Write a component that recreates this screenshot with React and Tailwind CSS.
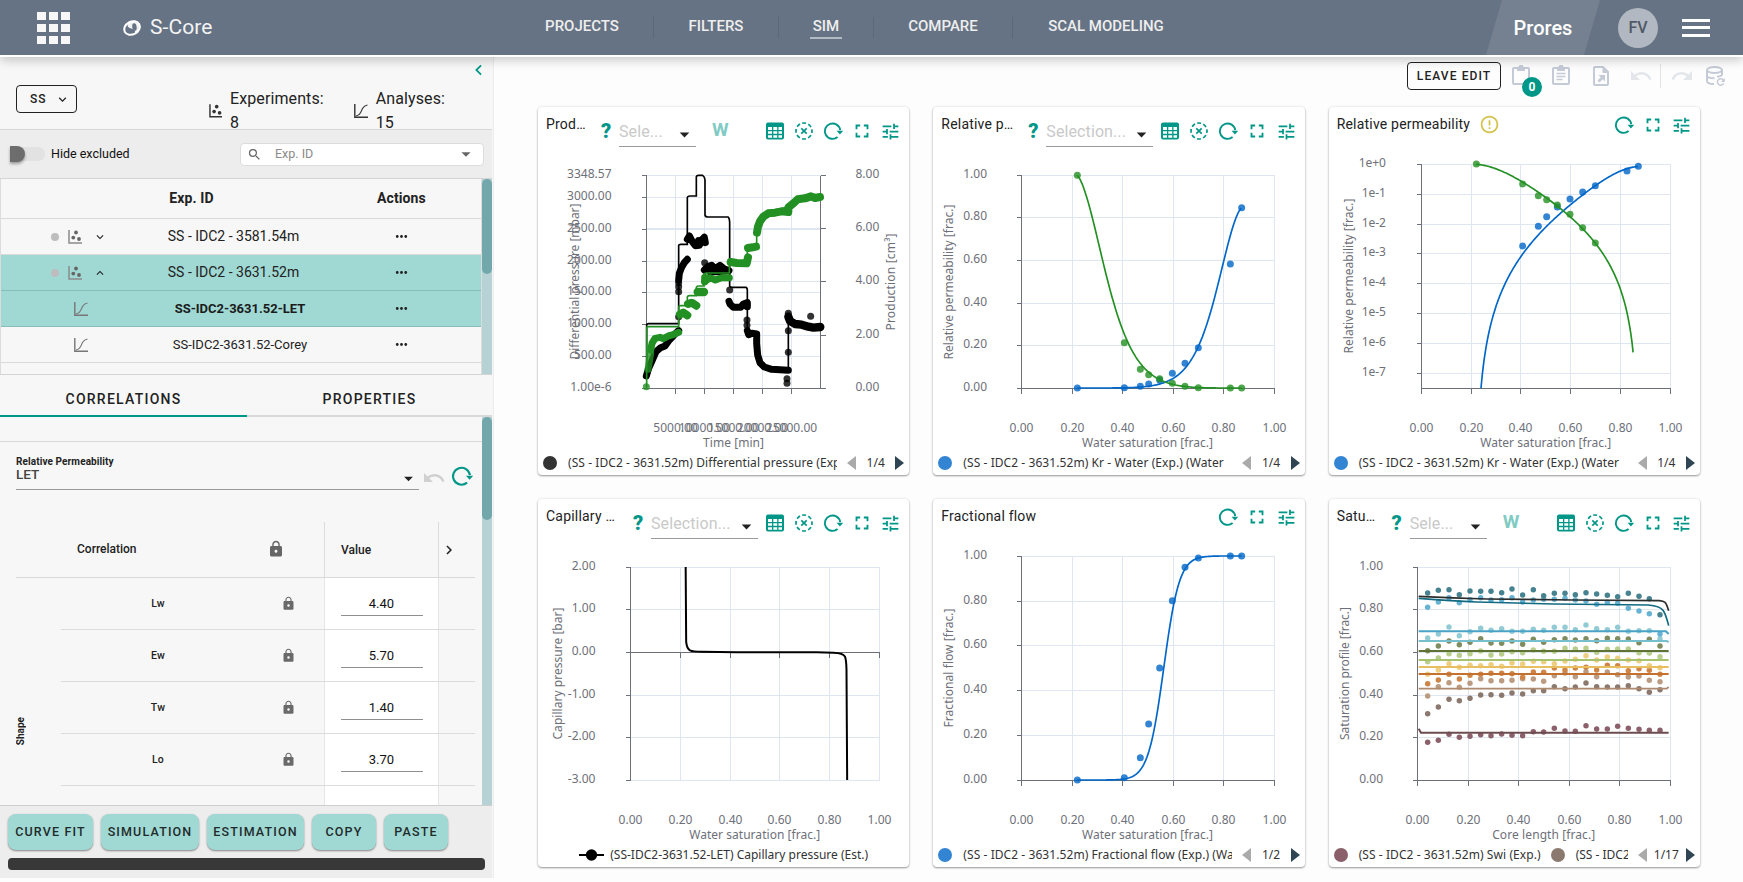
import React from "react";
import {
  MdFullscreen,
  MdTune,
  MdLock,
  MdSearch,
  MdArrowDropDown,
  MdUndo,
  MdRedo,
  MdErrorOutline,
  MdMoreHoriz,
  MdChevronRight,
  MdExpandMore,
  MdExpandLess,
  MdChevronLeft,
} from "react-icons/md";

/* ---------- icons ---------- */

function Logo() {
  return (
    <svg width="20" height="18" viewBox="0 0 20 18" className="text-white">
      <g transform="rotate(-28 10 9)">
        <ellipse cx="10" cy="9" rx="8.2" ry="6.4" fill="none" stroke="#fff" strokeWidth="2" />
        <path d="M9 2.5C6 5 7 7 9 9s3 4 1 6.5l5-1.5 3-5-2-4.500-4-2.500z" fill="#fff" opacity=".9" />
        <ellipse cx="12.6" cy="9.300" rx="2.200" ry="3.800" fill="#667384" transform="rotate(20 12.600 9.300)" />
      </g>
    </svg>
  );
}

function ScatterIcon({ color = "#4a4a4a", dot = color }) {
  return (
    <svg width="14" height="14" viewBox="0 0 14 14">
      <path d="M1 0v13h13" fill="none" stroke={color} strokeWidth="1.500" />
      <circle cx="8" cy="2.500" r="1.900" fill={dot} />
      <circle cx="5.300" cy="7.600" r="1.900" fill={dot} />
      <circle cx="11" cy="9" r="1.900" fill={dot} />
    </svg>
  );
}

function CurveIcon({ color = "#555" }) {
  return (
    <svg width="14" height="14" viewBox="0 0 14 14" fill="none" stroke={color}>
      <path d="M.8 0v13.200H14" strokeWidth="1.400" />
      <path d="M2 12C7 11 7 7 8.500 4.500S11 1.500 13.500 1" strokeWidth="1.200" />
    </svg>
  );
}

function RefreshIcon({ size = 20 }) {
  return (
    <svg width={size} height={size} viewBox="0 0 20 20">
      <path d="M17.200 9.200A7.700 7.700 0 1 0 14.600 16" fill="none" stroke="#009688" strokeWidth="1.900" />
      <path d="M13.600 9.800h6.600l-3.300 3.600z" fill="#009688" />
    </svg>
  );
}

function TableIcon() {
  return (
    <svg width="18" height="18" viewBox="0 0 18 18">
      <path
        fill="#009688"
        fillRule="evenodd"
        d="M2 .5h14a2 2 0 0 1 2 2v13a2 2 0 0 1-2 2H2a2 2 0 0 1-2-2v-13a2 2 0 0 1 2-2zM2 5v3h4V5zm5.300 0v3h3.900V5zm5.200 0v3H16V5zM2 9.300v2.500h4V9.300zm5.300 0v2.500h3.900V9.300zm5.200 0v2.500H16V9.300zM2 13.200v2.500h4v-2.500zm5.300 0v2.500h3.900v-2.500zm5.200 0v2.500H16v-2.500z"
      />
    </svg>
  );
}

function DashedClearIcon() {
  return (
    <svg width="18" height="18" viewBox="0 0 18 18" fill="none" stroke="#009688">
      <circle cx="9" cy="9" r="8" strokeWidth="1.700" strokeDasharray="3.900 2.383" strokeDashoffset="2" />
      <path d="M6.300 6.300l5.400 5.400M11.700 6.300l-5.400 5.400" strokeWidth="1.700" />
    </svg>
  );
}

function ClipboardIcon({ lines }) {
  return (
    <svg width="18" height="20" viewBox="0 0 18 20" fill="none" stroke="#c5cbd6" strokeWidth="2">
      <rect x="1" y="3" width="16" height="16" rx="1" />
      <path d="M5 3h8v3H5z" fill="#c5cbd6" stroke="none" />
      <circle cx="9" cy="2.500" r="1.700" />
      {lines && <path d="M4.500 8.500h9M4.500 11.500h9M4.500 14.500h6" strokeWidth="1.600" />}
    </svg>
  );
}

function FileExportIcon() {
  return (
    <svg width="16" height="20" viewBox="0 0 16 20">
      <path d="M1 2a1 1 0 0 1 1-1h8l5 5v12a1 1 0 0 1-1 1H2a1 1 0 0 1-1-1z" fill="none" stroke="#c5cbd6" strokeWidth="2" />
      <path d="M9.500 1v6H15z" fill="#c5cbd6" />
      <path d="M5.500 9H12v6.500l-2.200-2.200-3.300 3.200-2-2 3.200-3.300z" fill="#c5cbd6" />
    </svg>
  );
}

function DatabaseIcon() {
  return (
    <svg width="19" height="20" viewBox="0 0 19 20" fill="none" stroke="#c5cbd6" strokeWidth="2">
      <ellipse cx="8.500" cy="4" rx="7.500" ry="3" />
      <path d="M1 4v11c0 1.700 3 3 7 3M16 4v5M1 9.500c0 1.700 3.200 2.800 7.500 2.800M16 4v4c0 1.300-2 2.500-5 2.800" />
      <path d="M17.300 14.200a3.200 3.200 0 1 0 .3 3" strokeWidth="1.500" />
      <path d="M18.800 12v4h-4z" fill="#c5cbd6" stroke="none" />
    </svg>
  );
}

/* ---------- chart primitives ---------- */

const BLUE = "#0066c8";
const GREEN = "#239023";
const AXIS = "#6E7079";
const GRID = "#E0E6F1";

const FRAC = ["0.00", "0.20", "0.40", "0.60", "0.80", "1.00"];

function Axes({ left, right, top, bottom, xt, yt, xl, yl, labelX, xName, yName, rightTicks, zeroY }) {
  const base = zeroY ?? bottom;
  return (
    <g>
      <g stroke={GRID} shapeRendering="crispEdges">
        {xt.map((x) => <path key={"x" + x} d={`M${x} ${top}V${bottom}`} />)}
        {yt.map((y) => <path key={"y" + y} d={`M${left} ${y}H${right}`} />)}
        {rightTicks?.map((y) => <path key={"r" + y} d={`M${left} ${y}H${right}`} />)}
      </g>
      <g stroke={AXIS} shapeRendering="crispEdges">
        <path d={`M${left} ${top}V${bottom}M${left} ${base}H${right}`} />
        {xt.map((x) => <path key={x} d={`M${x} ${base}v5`} />)}
        {yt.map((y) => <path key={y} d={`M${left} ${y}h-5`} />)}
        {rightTicks && <path d={`M${right} ${top}V${bottom}`} />}
        {rightTicks?.map((y) => <path key={y} d={`M${right} ${y}h5`} />)}
      </g>
      <g fill={AXIS} fontSize="12">
        {yl.map((t, i) => (
          <text key={t} x={labelX} y={yt[i] + 2.500} textAnchor="end">{t}</text>
        ))}
        {xl.map((t, i) => t && (
          <text key={t} x={xt[i]} y="325" textAnchor="middle">{t}</text>
        ))}
        <text x={xName.x} y="340" textAnchor="middle" textLength={xName.w}>{xName.text}</text>
        <text
          textAnchor="middle"
          textLength={yName.w}
          transform={`translate(${yName.x + 4} ${yName.y}) rotate(-90)`}
        >
          {yName.text}
        </text>
      </g>
    </g>
  );
}

function Plot({ children }) {
  return (
    <svg
      width="371"
      height="296"
      viewBox="0 48 371 296"
      className="block shrink-0 font-['Noto_Sans','Open_Sans',sans-serif]"
    >
      {children}
    </svg>
  );
}

/* Series coordinates are kept at three units per pixel. */
function Series({ dx, dy, children }) {
  return <g transform={`translate(${-dx} ${-dy}) scale(0.33333)`}>{children}</g>;
}

function Dots({ xs, ys, color, r = 10.500, opacity = 0.8 }) {
  return (
    <g fill={color} fillOpacity={opacity}>
      {xs.map((x, i) => <circle key={i} cx={x} cy={ys[i]} r={r} />)}
    </g>
  );
}

/* LET relative permeability model */
const SWI = 0.22;
const SWM = 0.87;
const krw = (sw) => {
  const s = (sw - SWI) / (SWM - SWI);
  const a = Math.pow(s, 4.4);
  return (0.845 * a) / (a + 5.7 * Math.pow(1 - s, 1.4));
};
const kro = (sw) => {
  const s = (sw - SWI) / (SWM - SWI);
  const a = Math.pow(1 - s, 3.7);
  return a / (a + 4.8 * Math.pow(s, 1.4));
};
const fw = (sw) => 1 / (1 + (0.8 * kro(sw)) / Math.max(krw(sw), 1e-12));

function curve(fn, x0, xw, yOf, from = SWI, to = SWM) {
  const pts = [];
  for (let i = 0; i <= 160; i++) {
    const sw = Math.min(SWM - 1e-9, from + ((to - from) * i) / 160);
    pts.push(`${(x0 + sw * xw).toFixed(1)} ${yOf(fn(sw)).toFixed(1)}`);
  }
  return "M" + pts.join("L");
}

/* ---------- charts ---------- */

const Y6 = [281.5, 238.5, 196.5, 153.5, 110.5, 68.5];

function ProductionChart() {
  return (
    <Plot>
      <Axes
        left={108.5} right={282.5} top={68.5} bottom={281.5}
        xt={[137.5, 166.5, 195.5, 224.5, 253.5]}
        yt={[281.5, 249.5, 217.5, 185.5, 154.5, 122.5, 90.5, 68.5]}
        xl={["5000.00", "10000.00", "15000.00", "20000.00", "25000.00"]}
        yl={["1.00e-6", "500.00", "1000.00", "1500.00", "2000.00", "2500.00", "3000.00", "3348.57"]}
        labelX={73.5}
        rightTicks={[281.5, 228.5, 174.5, 121.5, 68.5]}
        xName={{ text: "Time [min]", x: 195.5, w: 61 }}
        yName={{ text: "Differential pressure [mbar]", x: 37, y: 174.5, w: 156 }}
      />
      <g fill={AXIS} fontSize="12">
        {["0.00", "2.00", "4.00", "6.00", "8.00"].map((t, i) => (
          <text key={t} x="317.500" y={[284, 231, 177, 124, 71][i]}>{t}</text>
        ))}
        <text textAnchor="middle" textLength="97" transform="translate(357 175) rotate(-90)">Production [cm³]</text>
      </g>
      <Series dx={8} dy={7}>
        <g fill="none" stroke="#000" strokeWidth="21" strokeLinecap="round" strokeLinejoin="round">
          <path d="M349 828L356 805L368 778L378 755L392 743L405 738L418 720L432 705L446 692" />
          <path d="M446 540L448 520L455 502L463 488L472 478" />
          <path d="M472 418L478 408L487 425L496 437L508 436L515 420L523 412L526 428L505 422" />
          <path d="M523 510L533 500L545 496L555 506L570 496L582 506L597 512L560 515L540 515" />
          <path d="M597 604L600 612L610 622L632 622L640 612L652 608L652 620" />
          <path d="M652 692L656 704L666 700L680 702L680 730L683 765L690 788L703 801L725 808L775 811" />
          <path d="M775 650L780 663L795 672L815 674L835 680L850 683L871 681" strokeWidth="25" />
        </g>
        <Dots
          color="#000"
          xs={[446, 446, 446, 524, 599, 651, 651, 775, 775, 775, 771, 771, 842, 446]}
          ys={[575, 548, 650, 488, 570, 660, 676, 640, 692, 757, 836, 850, 649, 560]}
        />
        <path
          d="M350 828V676Q350 671 356 671H446V436Q447 433 452 433H472V292Q473 288 480 288H499V230Q500 226 505 226H518Q524 230 525 240V345Q526 351 534 351H594Q598 353 599 366V558Q600 562 606 562H648Q652 563 652 572V700H680V740Q684 790 700 802Q720 809 775 811V650Q785 665 871 678"
          fill="none" stroke="#000" strokeWidth="5"
        />
        <g fill="none" stroke={GREEN} strokeWidth="21" strokeLinecap="round" strokeLinejoin="round">
          <path d="M362 750L366 730L375 715L390 712L400 716L415 708L430 704L446 697" />
          <path d="M354 808L358 785L362 760" opacity=".8" />
          <path d="M450 643L460 638L472 646" strokeWidth="24" />
          <path d="M474 612L485 608L499 617" strokeWidth="24" />
          <path d="M503 576L522 576" strokeWidth="25" />
          <path d="M524 545L540 533L556 540L575 533L598 533" />
          <path d="M524 545V532" />
          <path d="M602 486L620 489L650 490L654 472" strokeWidth="24" />
          <path d="M654 444L668 442L678 440" strokeWidth="24" />
          <path d="M681 398L684 380L690 364L700 350L715 340L735 338L755 334L775 336L775 322L790 310L803 298L825 295L843 289L855 294L870 291" strokeWidth="24" />
        </g>
        <Dots color={GREEN} xs={[349, 775]} ys={[860, 328]} />
        <path
          d="M350 862V684Q350 680 356 680H446V622Q447 617 452 617H472V590Q473 587 478 587H499V562Q500 558 505 558H522V523Q523 519 530 519H598V490H652V440H680V395Q683 355 705 338Q730 329 775 322Q800 300 840 290H871"
          fill="none" stroke={GREEN} strokeWidth="5"
        />
      </Series>
    </Plot>
  );
}

const PX = [457, 598, 646, 671, 704, 742, 780, 820, 916, 950];

function RelPermChart() {
  const y = (v) => 864 - 638 * v;
  return (
    <Plot>
      <Axes
        left={88.5} right={341.5} top={68.5} bottom={281.5}
        xt={[88.5, 139.5, 189.5, 240.5, 290.5, 341.5]} yt={Y6} xl={FRAC} yl={FRAC} labelX={54}
        xName={{ text: "Water saturation [frac.]", x: 214.5, w: 131 }}
        yName={{ text: "Relative permeability [frac.]", x: 16, y: 175, w: 155 }}
      />
      <Series dx={8} dy={7}>
        <Dots color={BLUE} xs={PX} ys={[864, 863, 859, 852, 840, 820, 790, 743, 492, 323]} />
        <path d={curve(krw, 289, 759, y)} fill="none" stroke={BLUE} strokeWidth="5" />
        <Dots color={GREEN} xs={PX} ys={[226, 728, 808, 824, 836, 850, 859, 863, 864, 864]} />
        <path d={curve(kro, 289, 759, y)} fill="none" stroke={GREEN} strokeWidth="5" />
      </Series>
    </Plot>
  );
}

function RelPermLogChart() {
  const y = (v) => 193 - 89.600 * Math.log10(Math.max(v, 1e-14));
  const xs = [608, 655, 680, 712, 750, 788, 826, 921, 955];
  return (
    <Plot>
      <defs>
        <clipPath id="logArea"><rect x="290" y="180" width="765" height="685" /></clipPath>
      </defs>
      <Axes
        left={92.5} right={341.5} top={57.5} bottom={281.5}
        xt={[92.5, 142.5, 191.5, 241.5, 291.5, 341.5]}
        yt={[57.5, 87.5, 117.5, 146.5, 176.5, 206.5, 236.5, 266.5]}
        xl={FRAC} yl={["1e+0", "1e-1", "1e-2", "1e-3", "1e-4", "1e-5", "1e-6", "1e-7"]} labelX={57}
        xName={{ text: "Water saturation [frac.]", x: 216.7, w: 131 }}
        yName={{ text: "Relative permeability [frac.]", x: 20, y: 169, w: 155 }}
      />
      <Series dx={9} dy={7}>
        <Dots color={BLUE} xs={xs} ys={[438, 379, 350, 321, 297, 276, 257, 213, 199]} />
        <path clipPath="url(#logArea)" d={curve(krw, 304, 747, y)} fill="none" stroke={BLUE} strokeWidth="5" />
        <Dots color={GREEN} xs={[469, ...xs.slice(0, 7)]} ys={[192, 252, 287, 299, 315, 343, 383, 429]} />
        <path d={curve(kro, 304, 747, y, SWI, 0.8505)} fill="none" stroke={GREEN} strokeWidth="5" />
      </Series>
    </Plot>
  );
}

function CapillaryChart() {
  return (
    <Plot>
      <Axes
        left={92.5} right={341.5} top={68.5} bottom={281.5} zeroY={153.5}
        xt={[92.5, 142.5, 192.5, 241.5, 291.5, 341.5]} yt={Y6} xl={FRAC}
        yl={["-3.00", "-2.00", "-1.00", "0.00", "1.00", "2.00"]} labelX={57.5}
        xName={{ text: "Water saturation [frac.]", x: 216.7, w: 131 }}
        yName={{ text: "Capillary pressure [bar]", x: 20, y: 174.5, w: 132 }}
      />
      <Series dx={8} dy={9}>
        <path
          d="M467 231L468.500 455Q470 475 480 481Q488 485 515 485L620 487H860L910 488Q940 489 945 500Q949 510 949.500 540L951.500 870"
          fill="none" stroke="#000" strokeWidth="6"
        />
      </Series>
    </Plot>
  );
}

function FractionalChart() {
  return (
    <Plot>
      <Axes
        left={88.5} right={341.5} top={57.5} bottom={281.5}
        xt={[88.5, 139.5, 189.5, 240.5, 290.5, 341.5]}
        yt={[281.5, 236.5, 191.5, 146.5, 102.5, 57.5]} xl={FRAC} yl={FRAC} labelX={54}
        xName={{ text: "Water saturation [frac.]", x: 214.5, w: 131 }}
        yName={{ text: "Fractional flow [frac.]", x: 15.500, y: 169, w: 119 }}
      />
      <Series dx={8} dy={9}>
        <Dots color={BLUE} xs={PX} ys={[870, 863, 803, 702, 534, 332, 232, 204, 198, 198]} />
        <path d={curve(fw, 289, 759, (v) => 870 - 672 * v)} fill="none" stroke={BLUE} strokeWidth="5" />
      </Series>
    </Plot>
  );
}

const SX = [323, 355, 387, 418, 450, 482, 513, 545, 576, 608, 640, 671, 703, 735, 766, 798, 830, 862, 893, 925, 957, 988, 1020];
const SAT = [
  ["#8b606a", [757, 751, 733, 742, 739, 734, 737, 732, 736, 737, 725, 726, 715, 723, 724, 707, 717, 717, 709, 715, 718, 721, 721]],
  ["#8b786e", [671, 651, 628, 632, 625, 615, 614, 616, 609, 612, 602, 602, 590, 596, 591, 579, 590, 591, 591, 587, 596, 607, 599]],
  ["#bb9c82", [618, 590, 578, 592, 580, 566, 572, 572, 571, 566, 567, 574, 557, 549, 560, 545, 560, 546, 554, 561, 558, 571, 575]],
  ["#cf8548", [581, 570, 553, 567, 556, 553, 550, 550, 551, 562, 546, 547, 534, 540, 534, 532, 540, 526, 527, 542, 536, 541, 553]],
  ["#eece80", [553, 540, 521, 532, 526, 527, 524, 529, 519, 522, 514, 515, 521, 513, 508, 497, 510, 501, 505, 510, 512, 527, 533]],
  ["#b8ce8c", [515, 504, 491, 496, 491, 483, 495, 492, 485, 488, 480, 484, 484, 475, 477, 475, 487, 478, 477, 477, 488, 489, 500]],
  ["#7e8c60", [482, 468, 453, 464, 457, 446, 459, 460, 453, 463, 448, 457, 449, 446, 450, 446, 452, 445, 446, 447, 458, 448, 468]],
  ["#93cbd5", [444, 432, 411, 437, 425, 415, 421, 416, 424, 424, 418, 421, 412, 412, 419, 405, 416, 419, 412, 424, 422, 422, 446]],
  ["#66b3d4", [352, 336, 323, 338, 329, 323, 330, 329, 323, 336, 330, 328, 328, 325, 330, 333, 343, 337, 340, 355, 363, 371, 432]],
  ["#46828f", [309, 301, 299, 314, 303, 304, 304, 308, 297, 315, 299, 317, 310, 310, 314, 308, 312, 316, 320, 310, 319, 326, 374]],
];
const SAT_LINES = [
  ["#6d4c50", "M296 716L303 728H1046", 6],
  ["#ad8a70", "M296 596H1040L1046 591", 5],
  ["#c4712f", "M296 552H1046", 6],
  ["#e7bf60", "M296 531H1046", 6],
  ["#a6c26f", "M296 510H1046", 6],
  ["#5f7434", "M296 483H1046", 6],
  ["#78bfcd", "M296 453H1040L1046 456", 6],
  ["#4aa3c6", "M296 424H1038L1046 432", 6],
  ["#136a80", "M296 325Q400 333 470 336L700 342L985 345Q1020 348 1030 362Q1038 374 1046 407", 5],
  ["#2a2d2c", "M296 319Q400 324 500 327L760 330L1018 332Q1030 333 1035 337Q1040 342 1046 362", 5],
];

function SaturationChart() {
  return (
    <Plot>
      <Axes
        left={88.5} right={341.5} top={68.5} bottom={281.5}
        xt={[88.5, 139.5, 189.5, 240.5, 290.5, 341.5]} yt={Y6} xl={FRAC} yl={FRAC} labelX={54}
        xName={{ text: "Core length [frac.]", x: 214.7, w: 103 }}
        yName={{ text: "Saturation profile [frac.]", x: 16, y: 174.5, w: 133 }}
      />
      <Series dx={9} dy={9}>
        {SAT.map(([c, ys]) => <Dots key={c} color={c} xs={SX} ys={ys} r={8.2} opacity={1} />)}
        {SAT_LINES.map(([c, d, w]) => <path key={c} d={d} fill="none" stroke={c} strokeWidth={w} />)}
      </Series>
    </Plot>
  );
}

/* ---------- cards ---------- */

function Legend({ color, text, page, extra }) {
  return (
    <div className="flex h-6 items-center pl-[5px] pr-[5px] font-['Noto_Sans','Open_Sans',sans-serif] text-[12px] text-[#333]">
      <div className="flex w-[294px] shrink-0 items-center overflow-hidden whitespace-nowrap">
        <span className="mr-[11px] size-3.5 shrink-0 rounded-full" style={{ background: color }} />
        <span className="tracking-[0.07px]">{text}</span>
        {extra && (
          <>
            <span className="ml-[10px] mr-[11px] size-3.5 shrink-0 rounded-full bg-[#8b786e]" />
            <span>{extra}</span>
          </>
        )}
      </div>
      <svg width="9" height="14" viewBox="0 0 9 14" className="ml-[10px] shrink-0"><path d="M9 0v14L0 7z" fill="#aaa" /></svg>
      <span className="flex-1 text-center">{page}</span>
      <svg width="9" height="14" viewBox="0 0 9 14" className="shrink-0"><path d="M0 0v14l9-7z" fill="#2f4554" /></svg>
    </div>
  );
}

function IconCell({ children }) {
  return <span className="flex w-[29px] shrink-0 items-center justify-center">{children}</span>;
}

function Card({ title, select, w, warn, chart, legend }) {
  return (
    <section className="flex flex-col overflow-hidden rounded bg-white shadow-[0_1px_2px_rgba(0,0,0,0.38),0_0_3px_rgba(0,0,0,0.1)]">
      <div className="flex h-12 shrink-0 items-start pl-2 pr-1 text-[#222]">
        <h2
          className={
            "mt-[7px] truncate text-[14px] leading-5 tracking-[0.2px] " +
            (select === "short" ? "w-[41px]" : select === "long" ? "w-[73px]" : "")
          }
        >
          {title}
        </h2>
        {warn && <MdErrorOutline className="ml-[9px] mt-[7px] size-[21px] text-[#d4c24c]" />}
        {select && (
          <>
            <span className="ml-[13px] mt-[12px] w-[12px] text-center text-[20px] font-black leading-6 text-[#009688]">?</span>
            <div
              className={
                "ml-[7px] mt-[10px] flex h-[30px] items-center border-b border-[#9a9a9a] " +
                (select === "short" ? "w-[77px]" : "w-[107px]")
              }
            >
              <span className="flex-1 truncate text-[16px] leading-5 tracking-[0.1px] text-[#c9c9c9]">
                {select === "short" ? "Sele..." : "Selection..."}
              </span>
              <MdArrowDropDown className="mt-[6px] size-[23px] text-[#222]" />
            </div>
            {w && <span className="ml-[16px] mt-[11px] text-[19px] font-bold leading-6 text-[#80cbc4]">W</span>}
          </>
        )}
        <div className={"ml-auto flex h-5 items-center text-[#009688] " + (select ? "mt-[14px]" : "mt-[8px]")}>
          {select && (
            <>
              <IconCell><TableIcon /></IconCell>
              <IconCell><DashedClearIcon /></IconCell>
            </>
          )}
          <IconCell><RefreshIcon /></IconCell>
          <IconCell><MdFullscreen className="size-[22px]" /></IconCell>
          <IconCell><MdTune className="size-[21px]" /></IconCell>
        </div>
      </div>
      {chart}
      {legend}
    </section>
  );
}

/* ---------- top bar ---------- */

const NAV = [
  ["PROJECTS", "w-[143px]"],
  ["FILTERS", "w-[125px]"],
  ["SIM", "w-[95px]"],
  ["COMPARE", "w-[139px]"],
  ["SCAL MODELING", "w-[186px]"],
];

function TopBar() {
  return (
    <header className="relative z-10 flex h-[57px] shrink-0 border-b-2 border-white bg-[#667384] text-white shadow-[0_3px_10px_rgba(0,0,0,0.22)]">
      <div className="flex w-[511px] items-center">
        <div className="ml-[37px] grid grid-cols-[9px_9px_9px] gap-x-[3px] gap-y-1">
          {Array.from({ length: 9 }, (_, i) => <span key={i} className="h-2 bg-[#f7f7f7]" />)}
        </div>
        <span className="ml-[52px]"><Logo /></span>
        <span className="ml-[8px] text-[21px] tracking-[0.1px] text-[#f4f4f4]">S-Core</span>
      </div>
      <nav className="flex items-start pt-[17px]">
        {NAV.map(([label, width], i) => (
          <div
            key={label}
            className={`flex h-[21px] justify-center ${i < 4 ? "border-r border-[#5c6878]" : ""} ${width}`}
          >
            <span
              className={
                "h-[22px] px-[3px] text-[15px] font-medium leading-[19px] text-[#eee] " +
                (label === "SIM" ? "border-b-2 border-[#b3bac3]" : "")
              }
            >
              {label}
            </span>
          </div>
        ))}
      </nav>
      <div className="ml-auto flex items-center pr-[33px]">
        <div className="flex h-full w-[114px] items-center justify-center bg-[#758191] text-[20px] font-medium [clip-path:polygon(16px_0,100%_0,98px_100%,0_100%)]">
          Prores
        </div>
        <span className="ml-[18px] flex size-10 items-center justify-center rounded-full bg-[#b2b8c1] text-[16px] font-medium text-[#4f5966]">FV</span>
        <div className="ml-[24px] flex w-[28px] flex-col gap-[4.500px]">
          <span className="h-[3px] bg-white" />
          <span className="h-[3px] bg-white" />
          <span className="h-[3px] bg-white" />
        </div>
      </div>
    </header>
  );
}

/* ---------- sidebar ---------- */

function ExpRow({ name, kind, open, active, bold }) {
  return (
    <div
      className={
        "flex h-9 shrink-0 items-center border-b text-[14px] text-[#222] " +
        (active ? "border-[#86bdb9] bg-[#a0d9d4]" : "border-[#d9d9d9]")
      }
    >
      <div className="flex w-[120px] items-center">
        {kind === "exp" ? (
          <>
            <span className="ml-[50px] size-2 rounded-full bg-[#bdbdbd]" />
            <span className="ml-[9px]"><ScatterIcon color="#8a8a8a" dot="#666" /></span>
            {open ? <MdExpandLess className="ml-[11px] size-3.5" /> : <MdExpandMore className="ml-[11px] size-3.5" />}
          </>
        ) : (
          <span className="ml-[73px]"><CurveIcon color="#777" /></span>
        )}
      </div>
      <span className={"w-[225px] text-center " + (kind === "exp" ? "" : "pl-[13px] text-[13px] ") + (bold ? "font-bold text-[#1b1b1b]" : "")}>
        {name}
      </span>
      <span className="flex flex-1 justify-center"><MdMoreHoriz className="size-[17px] translate-x-[-12px]" /></span>
    </div>
  );
}

function ParamRow({ name, value }) {
  return (
    <div className="flex h-[52px] shrink-0 border-b border-[#dcdcdc]">
      <span className="w-[194px] self-center text-center text-[10.500px] font-medium tracking-[0.2px]">{name}</span>
      <span className="flex w-[69px] items-center pl-[26px]"><MdLock className="size-[15px] text-[#6a6a6a]" /></span>
      <span className="flex w-[115px] items-start justify-center border-x border-[#e6e6e6] bg-white pt-[13px]">
        <span className="h-[25px] w-[82px] border-b border-[#8f8f8f] text-center text-[13px] leading-[25px] text-[#111]">{value}</span>
      </span>
    </div>
  );
}

function Sidebar() {
  return (
    <aside className="flex h-[821px] w-[494px] shrink-0 flex-col border-r border-[#ececec] bg-[#f7f7f7] pr-[1px] text-[#222]">
      <div className="flex h-[72px] shrink-0 items-start">
        <button className="ml-4 mt-[28px] flex h-7 w-[62px] items-center rounded border border-[#222] pl-[13px] text-[12px] font-medium tracking-[1px]">
          SS
          <MdExpandMore className="ml-[8px] size-[15px]" />
        </button>
        <div className="ml-[132px] mt-[30px] flex items-center text-[16px] leading-6 tracking-[0.1px]">
          <ScatterIcon color="#333" />
          <span className="ml-[8px]">Experiments:&nbsp; 8</span>
          <span className="ml-[17px]"><CurveIcon color="#333" /></span>
          <span className="ml-[8px]">Analyses:&nbsp; 15</span>
        </div>
        <MdChevronLeft className="ml-auto mr-[3px] mt-[2px] size-[22px] stroke-[#009688] text-[#009688]" />
      </div>
      <div className="flex h-[49px] shrink-0 items-center border-t border-[#d8d8d8] bg-[#ededed]">
        <span className="ml-[10px] flex h-3.5 w-[35px] items-center rounded-r-full bg-[#e2e2e2]">
          <span className="h-4 w-[15px] rounded-l-[6px] rounded-r-full bg-[#6d6d6d] shadow-[0_2px_3px_rgba(0,0,0,0.35)]" />
        </span>
        <span className="ml-[6px] text-[12.500px] text-[#111]">Hide excluded</span>
        <span className="ml-auto mr-[8px] flex h-[23px] w-[244px] items-center rounded border border-[#dcdcdc] bg-white text-[12.500px] text-[#8a8a8a]">
          <MdSearch className="ml-[6px] size-[15px] text-[#666]" />
          <span className="ml-[13px]">Exp. ID</span>
          <MdArrowDropDown className="ml-auto mr-[6px] size-[22px] text-[#666]" />
        </span>
      </div>
      <div className="flex h-[197px] shrink-0 border-y border-[#d4d4d4]">
        <div className="flex w-[482px] flex-col overflow-hidden border-x border-[#dcdcdc]">
          <div className="flex h-10 shrink-0 items-center border-b border-[#d9d9d9] text-[14px] font-bold tracking-[0.1px]">
            <span className="w-[381px] text-center">Exp. ID</span>
            <span className="-ml-[5px]">Actions</span>
          </div>
          <ExpRow kind="exp" name="SS - IDC2 - 3581.54m" />
          <ExpRow kind="exp" name="SS - IDC2 - 3631.52m" open active />
          <ExpRow kind="an" name="SS-IDC2-3631.52-LET" active bold />
          <ExpRow kind="an" name="SS-IDC2-3631.52-Corey" />
        </div>
        <div className="w-[10px] bg-[#b7d2d5]"><div className="h-[95px] rounded-full bg-[#72a8ab]" /></div>
      </div>
      <div className="flex h-[42px] shrink-0 text-center text-[14px] font-medium leading-[48px] tracking-[1.250px]">
        <span className="w-[247px] border-b-2 border-[#009688]">CORRELATIONS</span>
        <span className="flex-1 border-b-2 border-[#d9d9d9]">PROPERTIES</span>
      </div>
      <div className="flex h-[388px] shrink-0 overflow-hidden">
        <div className="flex w-[483px] flex-col">
          <div className="h-[25px] shrink-0 border-b border-[#d9d9d9]" />
          <div className="ml-4 flex h-[80px] shrink-0">
            <div className="mt-[13px] h-[35px] w-[403px] border-b border-[#9a9a9a]">
              <div className="text-[10px] font-bold leading-[13px] tracking-[0.1px]">Relative Permeability</div>
              <div className="flex h-[14px] justify-between text-[13.500px] font-medium leading-[12px] text-[#444]">
                LET
                <MdArrowDropDown className="size-[21px] text-[#222]" />
              </div>
            </div>
            <MdUndo className="ml-[3px] mt-[24px] size-6 text-[#d0d0d0]" />
            <span className="ml-[5px] mt-[23px]"><RefreshIcon size={22} /></span>
          </div>
          <div className="ml-4 flex h-[56px] w-[459px] shrink-0 border-b border-[#d9d9d9] text-[12px] font-medium">
            <span className="w-[308px] flex-none">
              <span className="flex h-[54px] items-center">
                <span className="ml-[61px] w-[190px]">Correlation</span>
                <MdLock className="size-[18px] text-[#666]" />
              </span>
            </span>
            <span className="flex w-[115px] items-center border-x border-[#dcdcdc] pl-[16px]">Value</span>
            <MdChevronRight className="ml-[1px] mt-[19px] size-[18px]" />
          </div>
          <div className="ml-4 flex w-[459px] flex-1 overflow-hidden">
            <div className="flex w-[45px] items-start">
              <span className="mt-[139px] text-[10px] font-bold leading-[10px] [writing-mode:vertical-rl] rotate-180">Shape</span>
            </div>
            <div className="flex flex-1 flex-col">
              <ParamRow name="Lw" value="4.40" />
              <ParamRow name="Ew" value="5.70" />
              <ParamRow name="Tw" value="1.40" />
              <ParamRow name="Lo" value="3.70" />
              <div className="ml-[263px] w-[115px] flex-1 border-x border-[#e6e6e6] bg-white" />
            </div>
          </div>
        </div>
        <div className="w-[10px] bg-[#b7d2d5]"><div className="h-[103px] rounded-full bg-[#72a8ab]" /></div>
      </div>
      <div className="flex-1 border-t border-[#cfcfcf] bg-[#ededed] px-2 pt-[8px]">
        <div className="flex gap-2 text-[12.500px] font-medium tracking-[1.150px] text-[#1f2b2a]">
          {[
            ["CURVE FIT", "w-[85px]"],
            ["SIMULATION", "w-[98px]"],
            ["ESTIMATION", "w-[97px]"],
            ["COPY", "w-[64px]"],
            ["PASTE", "w-[64px]"],
          ].map(([t, wd]) => (
            <button key={t} className={`h-9 whitespace-nowrap rounded-lg bg-[#a0d9d4] text-center shadow-[0_1px_2px_rgba(0,0,0,0.45)] ${wd}`}>
              {t}
            </button>
          ))}
        </div>
        <div className="mt-2 h-3 w-[477px] rounded bg-[#383838]" />
      </div>
    </aside>
  );
}

function Toolbar() {
  return (
    <div className="flex h-[50px] shrink-0 items-start justify-end pr-[18px] pt-[5px]">
      <button className="h-7 w-[94px] rounded border border-[#222] text-[12px] font-medium tracking-[1.100px] text-[#222]">LEAVE EDIT</button>
      <span className="relative ml-[11px] mt-[3px]">
        <ClipboardIcon />
        <span className="absolute left-[10px] top-[12px] flex size-5 items-center justify-center rounded-full bg-[#009688] text-[12px] font-bold text-white">0</span>
      </span>
      <span className="ml-[22px] mt-[3px]"><ClipboardIcon lines /></span>
      <span className="ml-[23px] mt-[4px]"><FileExportIcon /></span>
      <MdUndo className="ml-[20px] mt-[2px] size-6 text-[#e3e6eb]" />
      <span className="ml-[7px] mt-[2px] h-6 w-px bg-[#e3e3e3]" />
      <MdRedo className="ml-[9px] mt-[2px] size-6 text-[#e3e6eb]" />
      <span className="ml-[12px] mt-[4px]"><DatabaseIcon /></span>
    </div>
  );
}

export default function App() {
  const b = "#3385d3";
  return (
    <div className="flex h-[882px] w-[1743px] flex-col overflow-hidden bg-[#fdfdfd] font-['Roboto','Liberation_Sans',sans-serif]">
      <TopBar />
      <div className="flex flex-1">
        <Sidebar />
        <main className="flex flex-1 flex-col">
          <Toolbar />
          <div className="ml-[44px] grid w-[1162px] grid-cols-3 grid-rows-[368px_368px] gap-6">
            <Card title="Production" select="short" w chart={<ProductionChart />}
              legend={<Legend color="#333" text="(SS - IDC2 - 3631.52m) Differential pressure (Exp.)" page="1/4" />} />
            <Card title="Relative permeability" select="long" chart={<RelPermChart />}
              legend={<Legend color={b} text="(SS - IDC2 - 3631.52m) Kr - Water (Exp.) (Water" page="1/4" />} />
            <Card title="Relative permeability" warn chart={<RelPermLogChart />}
              legend={<Legend color={b} text="(SS - IDC2 - 3631.52m) Kr - Water (Exp.) (Water" page="1/4" />} />
            <Card title="Capillary pressure" select="long" chart={<CapillaryChart />}
              legend={
                <div className="flex h-6 items-center justify-center font-['Noto_Sans','Open_Sans',sans-serif] text-[12px] text-[#333]">
                  <svg width="25" height="12" viewBox="0 0 25 12" className="mr-[6px]">
                    <path d="M0 6h25" stroke="#000" strokeWidth="2" /><circle cx="12.500" cy="6" r="5.700" />
                  </svg>
                  (SS-IDC2-3631.52-LET) Capillary pressure (Est.)
                </div>
              } />
            <Card title="Fractional flow" chart={<FractionalChart />}
              legend={<Legend color={b} text="(SS - IDC2 - 3631.52m) Fractional flow (Exp.) (Water)" page="1/2" />} />
            <Card title="Saturation" select="short" w chart={<SaturationChart />}
              legend={<Legend color="#8b606a" text="(SS - IDC2 - 3631.52m) Swi (Exp.)" extra="(SS - IDC2" page="1/17" />} />
          </div>
        </main>
      </div>
    </div>
  );
}
